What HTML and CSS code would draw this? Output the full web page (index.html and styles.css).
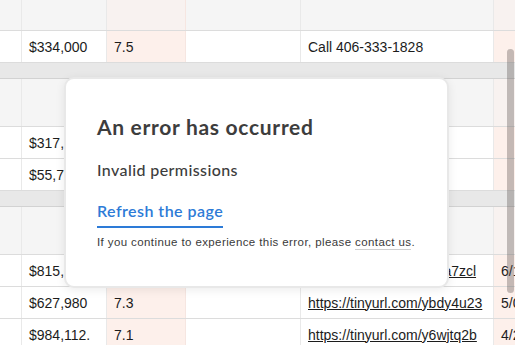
FILE: index.html
```html
<!DOCTYPE html>
<html lang="en">
<head>
    <meta charset="UTF-8">
    <meta name="viewport" content="width=device-width, initial-scale=1.0">
    <title>Error</title>
    <link rel="stylesheet" href="styles.css">
</head>
<body>
    <div class="viewport">
        <div class="sheet">
            <div class="row group-head">
                <div class="cell"></div><div class="cell"></div><div class="cell score"></div><div class="cell"></div><div class="cell"></div><div class="cell date"></div>
            </div>
            <div class="row">
                <div class="cell"></div><div class="cell">$334,000</div><div class="cell score">7.5</div><div class="cell"></div><div class="cell">Call 406-333-1828</div><div class="cell date"></div>
            </div>
            <div class="band"></div>
            <div class="row group-head">
                <div class="cell"></div><div class="cell"></div><div class="cell score"></div><div class="cell"></div><div class="cell"></div><div class="cell date"></div>
            </div>
            <div class="row">
                <div class="cell"></div><div class="cell">$317,350</div><div class="cell score">7.8</div><div class="cell"></div><div class="cell"></div><div class="cell date"></div>
            </div>
            <div class="row">
                <div class="cell"></div><div class="cell">$55,730</div><div class="cell score">6.9</div><div class="cell"></div><div class="cell"></div><div class="cell date"></div>
            </div>
            <div class="band"></div>
            <div class="row group-head">
                <div class="cell"></div><div class="cell"></div><div class="cell score"></div><div class="cell"></div><div class="cell"></div><div class="cell date"></div>
            </div>
            <div class="row">
                <div class="cell"></div><div class="cell">$815,000</div><div class="cell score">7.6</div><div class="cell"></div><div class="cell"><a href="#">https://tinyurl.com/y8xa7zcl</a></div><div class="cell date">6/14/2019</div>
            </div>
            <div class="row">
                <div class="cell"></div><div class="cell">$627,980</div><div class="cell score">7.3</div><div class="cell"></div><div class="cell"><a href="#">https://tinyurl.com/ybdy4u23</a></div><div class="cell date">5/02/2019</div>
            </div>
            <div class="row">
                <div class="cell"></div><div class="cell">$984,112.</div><div class="cell score">7.1</div><div class="cell"></div><div class="cell"><a href="#">https://tinyurl.com/y6wjtq2b</a></div><div class="cell date">4/21/2019</div>
            </div>
        </div>

        <div class="scroll-thumb"></div>

        <div class="error-box">
            <h2 class="error-title">An error has occurred</h2>
            <p class="error-reason">Invalid permissions</p>
            <a href="#" class="refresh-link">Refresh the page</a>
            <p class="error-help">If you continue to experience this error, please <a href="#">contact us</a>.</p>
        </div>
    </div>
</body>
</html>
```

FILE: styles.css
```css
* {
    margin: 0;
    padding: 0;
    box-sizing: border-box;
}


body {
    font-family: "Liberation Sans", Arial, sans-serif;
    background-color: #ffffff;
    color: #1c1c1c;
}


.viewport {
    position: relative;
    width: 515px;
    height: 345px;
    overflow: hidden;
}


/* scrolled a little, so the first group header is cut at the top */
.sheet {
    margin-top: -17px;
    width: 560px;
}


.row {
    display: grid;
    grid-template-columns: 22px 85px 79px 115px 193px 66px;
    height: 32px;
    border-bottom: 1px solid #dcdcdc;
}


.row.group-head {
    height: 48px;
    background-color: #f5f5f5;
}


.cell {
    display: flex;
    align-items: center;
    padding: 0 7px;
    font-size: 14px;
    white-space: nowrap;
    overflow: hidden;
    border-right: 1px solid #e9e9e9;
}


.cell.score,
.cell.date {
    background-color: #fdf0eb;
    border-right-color: #f6e6e1;
}


.group-head .cell.score,
.group-head .cell.date {
    background-color: #f8f2f0;
}


.cell a {
    color: #1c1c1c;
    text-decoration: underline;
}


.band {
    height: 16px;
    background-color: #e8e8e8;
    border-bottom: 1px solid #d2d2d2;
}


.scroll-thumb {
    position: absolute;
    top: 49px;
    left: 507px;
    width: 7px;
    height: 244px;
    border-radius: 4px;
    background-color: rgba(90, 80, 78, 0.35);
}


.error-box {
    position: absolute;
    top: 77px;
    left: 64px;
    width: 385px;
    height: 211px;
    padding: 35px 18px 0 31px;
    background-color: #ffffff;
    border: 2px solid #e8e8e8;
    border-radius: 10px;
    box-shadow: 0 2px 10px rgba(0, 0, 0, 0.08);
    font-family: Lato, "Liberation Sans", sans-serif;
    color: #3d3d3d;
}


.error-title {
    font-size: 21px;
    line-height: 26px;
    font-weight: 700;
    letter-spacing: 0.7px;
}


.error-reason {
    margin-top: 20px;
    font-size: 16px;
    line-height: 20px;
    font-weight: 500;
    letter-spacing: 0.4px;
}


.refresh-link {
    display: inline-block;
    margin-top: 21px;
    padding-bottom: 5px;
    font-size: 16px;
    line-height: 20px;
    font-weight: 600;
    letter-spacing: 0.45px;
    color: #2d7bd7;
    text-decoration: none;
    border-bottom: 2px solid #2d7bd7;
}


.error-help {
    margin-top: 7px;
    font-family: "Liberation Sans", Arial, sans-serif;
    font-size: 11.5px;
    line-height: 14px;
    letter-spacing: 0.4px;
    white-space: nowrap;
    color: #3a3a3a;
}


.error-help a {
    color: #3a3a3a;
    text-decoration: none;
    border-bottom: 1px solid #cfcfcf;
    padding-bottom: 1px;
}
```
